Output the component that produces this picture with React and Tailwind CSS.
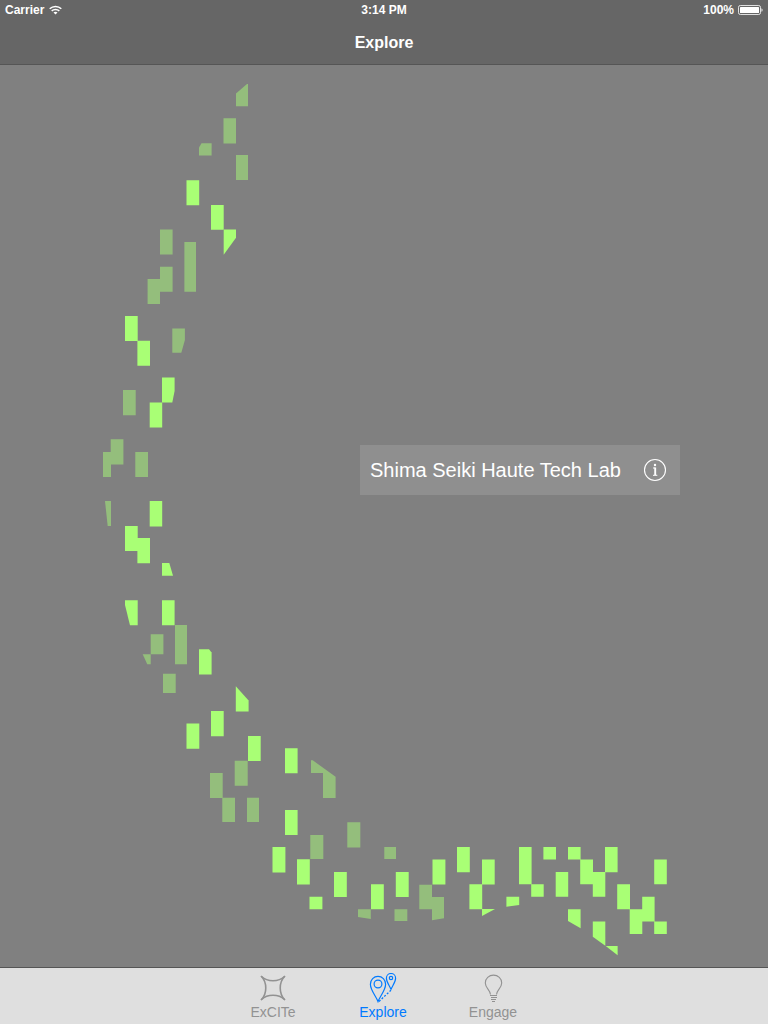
import React from "react";

const DIM = "#94be7c";
const BRIGHT = "#a9ff75";

// Rectangles as [x1, y1, x2, y2] in map units.
const dimRects = [
  [223.5, 118.3, 236, 143.5],
  [236, 155, 248, 180],
  [160, 229.4, 172.6, 254.6],
  [184.4, 242, 196, 291.7],
  [160, 266.7, 172.6, 291.7],
  [147.6, 279, 160, 304],
  [123, 390, 135.7, 415.3],
  [110.7, 439.3, 123.4, 464.6],
  [103, 452, 111, 477],
  [135.3, 452, 148, 477],
  [150.7, 634.3, 163.4, 654.3],
  [175, 625, 187, 664.3],
  [163, 673.7, 175.7, 693],
  [234.7, 760.7, 247.7, 785.7],
  [210, 773, 222.7, 798],
  [222.3, 797.7, 235, 822],
  [247, 797.7, 259, 822],
  [310.3, 835, 323.3, 859],
  [347.3, 822.3, 360.3, 847.5],
  [384.3, 847, 396, 859],
  [394.5, 909.3, 407.3, 921],
];

const brightRects = [
  [186.5, 180.3, 199.2, 205.2],
  [211, 205, 223.7, 229.8],
  [125, 316, 137.7, 341],
  [137.4, 340.7, 150, 365.7],
  [149.7, 402.4, 162.2, 427.5],
  [149.7, 501, 162.2, 526.4],
  [125, 526, 137.7, 551],
  [137.4, 538, 150, 563.2],
  [162, 600.3, 174.6, 625.2],
  [211, 711, 223.7, 736.3],
  [186.5, 723.5, 199.3, 748.7],
  [248, 736, 260.7, 761],
  [285, 748.3, 297.6, 773.3],
  [285, 810, 297.6, 835],
  [272.5, 847, 285.4, 872.5],
  [297, 859.3, 309.8, 884.5],
  [334, 872, 346.8, 897],
  [309.5, 896.7, 322.4, 909.3],
  [457, 847, 469.8, 872.2],
  [432.5, 859.4, 445.4, 884.5],
  [482, 859.4, 494.7, 884.5],
  [395.8, 872, 408.7, 897],
  [371, 884.2, 383.8, 909.2],
  [469.4, 884.2, 482.2, 909.2],
  [519, 847, 531.6, 884.3],
  [543.4, 847, 556, 859.6],
  [568, 847, 580.6, 859.6],
  [580.2, 859.4, 593, 884.3],
  [592.8, 872, 605.3, 896.8],
  [605, 847, 617.6, 872.2],
  [555.7, 872, 568.2, 896.8],
  [531.2, 884.3, 543.7, 896.8],
  [654.2, 859.4, 666.8, 884.3],
  [617.2, 884.3, 630, 909.3],
  [642.2, 896.7, 654.6, 921.6],
  [629.7, 909.2, 642.3, 934],
  [641.9, 909.2, 642.5, 921.6],
  [654.2, 921.4, 666.8, 934],
];

const dimShapes = [
  "236,93.5 247,84 248,84 248,106.3 236,106.3",
  "199,147.5 201.5,143.3 211.6,143.3 211.6,155.6 199,155.6",
  "172.3,328.4 184.9,328.4 184.9,340 181.3,352.8 172.3,352.8",
  "105,501 111,501 111,526 107.7,526",
  "142.7,654.3 150.7,654.3 150.7,664.3 147.3,664.3",
  "311,760.3 312.7,760.3 335.6,776.7 335.6,798 323,798 323,773 311,773",
  "419.3,884.7 432,884.7 432,897 444,897 444,918.3 432,920.3 432,909.3 419.3,909.3",
  "358,909.3 370.8,909.3 370.8,919 358,917",
];

const brightShapes = [
  "223.7,229.4 236,229.4 236,237.7 223.7,254.8",
  "162,377.6 174.6,377.6 174.6,391 172.3,402.6 162,402.6",
  "162,563 169.3,563 173,575.7 162,575.7",
  "125,600.3 137.7,600.3 137.7,625.2 130,625.2 125,605",
  "199,649.3 209,649.3 211.6,652.5 211.6,674.6 199,674.6",
  "235.8,686.3 248.6,700.5 248.6,711.6 235.8,711.6",
  "482,909 495,909 482,916",
  "506.4,896.8 519.2,896.8 519.2,905 506.4,906.7",
  "568,909.2 580.6,909.2 580.6,928.3 568,921",
  "592.8,921.4 605.3,921.4 605.3,945.7 592.8,936.7",
  "605.7,946 617.6,946 617.6,955.3",
];

function toPath(rects) {
  return rects.map(([a, b, c, d]) => `M${a} ${b}H${c}V${d}H${a}Z`).join("");
}

function FloorMap() {
  return (
    <svg viewBox="0 65 768 902" className="block h-auto w-full" role="img" aria-label="Map">
      <path d={toPath(dimRects)} fill={DIM} />
      {dimShapes.map((p) => (
        <polygon key={p} points={p} fill={DIM} />
      ))}
      <path d={toPath(brightRects)} fill={BRIGHT} />
      {brightShapes.map((p) => (
        <polygon key={p} points={p} fill={BRIGHT} />
      ))}
    </svg>
  );
}

function WifiIcon() {
  return (
    <svg width="13" height="10" viewBox="0 0 13 10" fill="none" stroke="#fff" strokeWidth="1.5" aria-hidden="true">
      <path d="M0.7 3.7C3.8 0.6 9.2 0.6 12.3 3.7" />
      <path d="M2.7 5.9C4.8 3.9 8.2 3.9 10.3 5.9" />
      <path d="M6.5 9.6L4.5 7.6C5.6 6.6 7.4 6.6 8.5 7.6Z" fill="#fff" stroke="none" />
    </svg>
  );
}

function BatteryIcon() {
  return (
    <svg width="25" height="10" viewBox="0 0 25 10" aria-hidden="true">
      <rect x="0.5" y="0.5" width="22" height="9" rx="1.8" fill="none" stroke="#fff" strokeOpacity="0.8" />
      <rect x="2" y="2" width="19" height="6" rx="0.6" fill="#fff" />
      <path d="M23.5 3.2C24.9 3.6 24.9 6.4 23.5 6.8Z" fill="#fff" />
    </svg>
  );
}

function StarIcon() {
  return (
    <svg width="26" height="30" viewBox="260 973 26 30" fill="none" stroke="currentColor" strokeWidth="1.6" strokeLinecap="round" aria-hidden="true">
      <path d="M261.5 976.5C267.5 982.2 278.5 982.2 284.5 976.5" />
      <path d="M261.5 999.5C267.5 993.8 278.5 993.8 284.5 999.5" />
      <path d="M261.5 976.5C267.2 982.5 267.2 993.5 261.5 999.5" />
      <path d="M284.5 976.5C278.8 982.5 278.8 993.5 284.5 999.5" />
    </svg>
  );
}

function PinsIcon() {
  return (
    <svg width="28" height="30" viewBox="369 973 28 30" fill="none" stroke="currentColor" strokeWidth="1.2" aria-hidden="true">
      <path d="M378 1001.5C376.4 996.8 370.4 990.3 370.4 984.2A7.6 7.8 0 0 1 385.6 984.2C385.6 990.3 379.6 996.8 378 1001.5Z" />
      <circle cx="378" cy="984" r="3.9" />
      <path d="M391 989.6C390.2 986.4 386.4 982.4 386.4 978.3A4.6 4.8 0 0 1 395.6 978.3C395.6 982.4 391.8 986.4 391 989.6Z" />
      <circle cx="391" cy="978" r="1.7" />
      <path d="M391 990.2L378.6 1001.8" strokeDasharray="2 1.6" strokeWidth="1.3" />
    </svg>
  );
}

function BulbIcon() {
  return (
    <svg width="20" height="30" viewBox="483 973 20 30" fill="none" stroke="currentColor" strokeWidth="1.1" aria-hidden="true">
      <path d="M490.5 994.5C490.5 990.4 485.3 988 485.3 982.9A8.2 7.8 0 0 1 501.7 982.9C501.7 988 496.5 990.4 496.5 994.5" />
      <path d="M490 995.5H497M491 997.5H497M491 999.5H496M492 1001.5H495" />
    </svg>
  );
}

function InfoIcon() {
  return (
    <svg width="24" height="24" viewBox="0 0 24 24" fill="none" stroke="#fff" aria-hidden="true">
      <circle cx="12" cy="12" r="10.5" strokeWidth="1.1" />
      <circle cx="12" cy="7" r="1.2" fill="#fff" stroke="none" />
      <path d="M10 10H12.3" strokeWidth="1" />
      <path d="M12.2 9.5V17" strokeWidth="1.9" />
      <path d="M10 17.3H14.3" strokeWidth="1" />
    </svg>
  );
}

const tabs = [
  { label: "ExCITe", Icon: StarIcon },
  { label: "Explore", Icon: PinsIcon, active: true },
  { label: "Engage", Icon: BulbIcon },
];

export default function App() {
  return (
    <div className="flex min-h-screen flex-col bg-[#808080] font-['Liberation_Sans',Arial,sans-serif]">
      <header className="border-b border-[#555555] bg-[#666666] text-white">
        <div className="grid h-5 grid-cols-3 items-center px-[5px] text-xs font-bold leading-5">
          <span className="flex items-center gap-[5px]">
            Carrier
            <WifiIcon />
          </span>
          <span className="text-center">3:14 PM</span>
          <span className="flex items-center justify-end gap-1">
            100%
            <BatteryIcon />
          </span>
        </div>
        <h1 className="flex h-11 items-center justify-center pt-0.5 text-base font-bold">Explore</h1>
      </header>

      <main className="flex-1">
        <div className="relative">
          <FloorMap />
          <button
            type="button"
            className="absolute left-[46.875%] top-[42.13%] flex h-[50px] w-80 items-center justify-between bg-[#8f8f8f] pl-2.5 pr-[13px] text-xl text-white"
          >
            <span className="whitespace-nowrap">Shima Seiki Haute Tech Lab</span>
            <InfoIcon />
          </button>
        </div>
      </main>

      <nav className="flex h-[57px] justify-center gap-[34px] border-t border-[#555555] bg-[#dfdfdf] pr-0.5">
        {tabs.map(({ label, Icon, active }) => (
          <a
            key={label}
            href={"#" + label.toLowerCase()}
            aria-current={active ? "page" : undefined}
            className={
              "flex w-[76px] flex-col items-center pt-[5px] text-sm leading-[18px] " +
              (active ? "text-[#007aff]" : "text-[#929292]")
            }
          >
            <Icon />
            {label}
          </a>
        ))}
      </nav>
    </div>
  );
}
